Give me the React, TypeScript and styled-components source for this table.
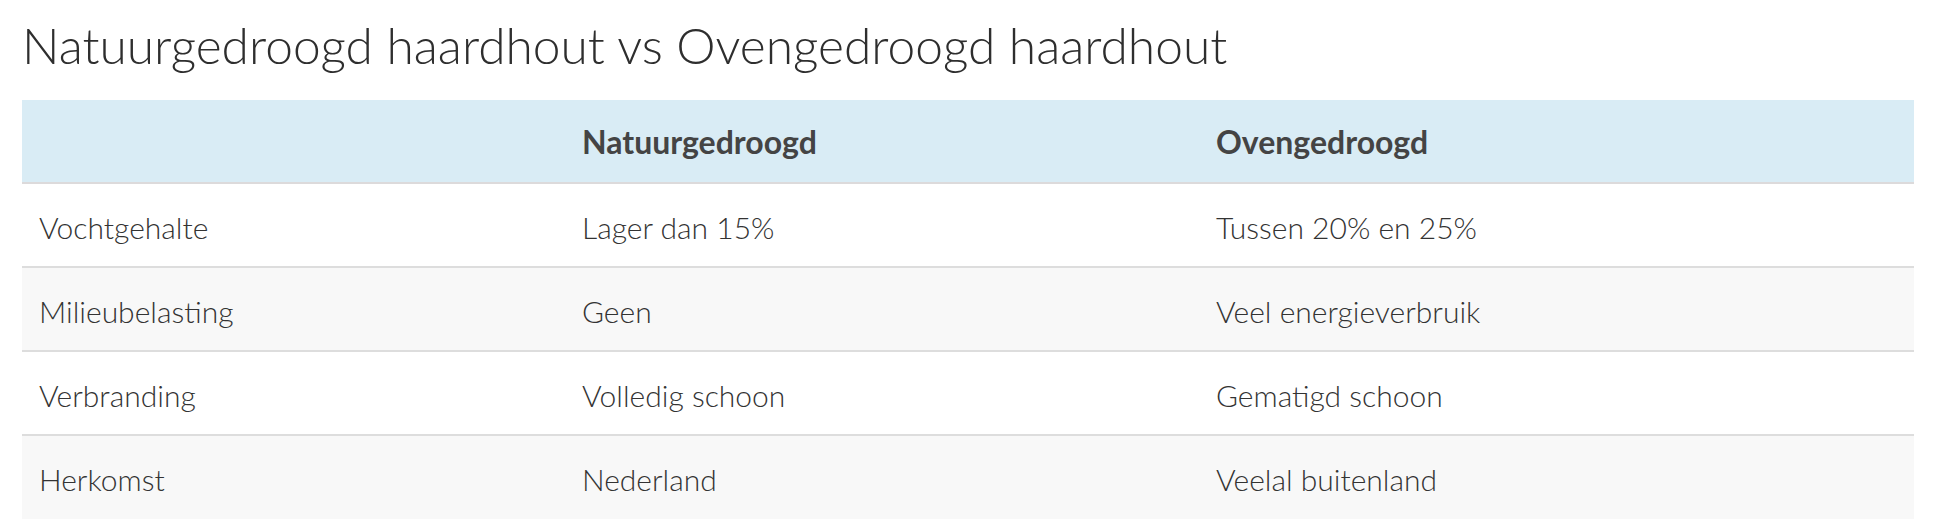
import React from "react";
import styled, {createGlobalStyle} from "styled-components";

const GlobalStyle = createGlobalStyle`
  html, body {
    margin: 0;
    padding: 0;
    background: #ffffff;
  }

  body {
    font-family: Lato, "Open Sans", "Liberation Sans", sans-serif;
    color: #444444;
  }
`;

type Row = {
  label: string;
  natural: string;
  oven: string;
};

const rows: Row[] = [
  {label: "Vochtgehalte", natural: "Lager dan 15%", oven: "Tussen 20% en 25%"},
  {label: "Milieubelasting", natural: "Geen", oven: "Veel energieverbruik"},
  {label: "Verbranding", natural: "Volledig schoon", oven: "Gematigd schoon"},
  {label: "Herkomst", natural: "Nederland", oven: "Veelal buitenland"},
];

const App: React.FC = () => {
  return (
    <>
      <GlobalStyle/>
      <Page>
        <Title>Natuurgedroogd haardhout vs Ovengedroogd haardhout</Title>

        <Table>
          <colgroup>
            <col style={{width: "543px"}}/>
            <col style={{width: "634px"}}/>
            <col/>
          </colgroup>
          <thead>
          <HeadRow>
            <HeadCell/>
            <HeadCell>Natuurgedroogd</HeadCell>
            <HeadCell>Ovengedroogd</HeadCell>
          </HeadRow>
          </thead>
          <tbody>
          {rows.map((row, index) => (
            <BodyRow key={row.label} striped={index % 2 === 1}>
              <Cell>{row.label}</Cell>
              <Cell>{row.natural}</Cell>
              <Cell>{row.oven}</Cell>
            </BodyRow>
          ))}
          </tbody>
        </Table>
      </Page>
    </>
  );
};

export default App;

const Page = styled.main`
  width: 1934px;
  padding: 16px 20px 0 22px;
  box-sizing: border-box;
`;

const Title = styled.h1`
  margin: 0 0 26px 0;
  font-size: 49.7px;
  line-height: 58px;
  font-weight: 300;
  color: #2e2e2e;
`;

const Table = styled.table`
  width: 1892px;
  border-collapse: collapse;
  table-layout: fixed;
`;

const HeadRow = styled.tr`
  background-color: #d9ecf5;
  border-bottom: 2px solid #dcdadb;
`;

const HeadCell = styled.th`
  height: 82px;
  padding: 0 17px;
  text-align: left;
  vertical-align: middle;
  font-size: 32px;
  font-weight: 700;
  color: #444444;
`;

const BodyRow = styled.tr.withConfig({
  shouldForwardProp: (prop) => prop !== "striped",
})<{striped: boolean}>`
  background-color: ${({striped}) => (striped ? "#f8f8f8" : "#ffffff")};
  border-top: 2px solid #dddddd;

  &:first-child {
    border-top: none;
  }
`;

const Cell = styled.td`
  box-sizing: border-box;
  height: 84px;
  padding: 3px 17px 0;
  vertical-align: middle;
  font-size: 30px;
  font-weight: 300;
  color: #333333;
`;
